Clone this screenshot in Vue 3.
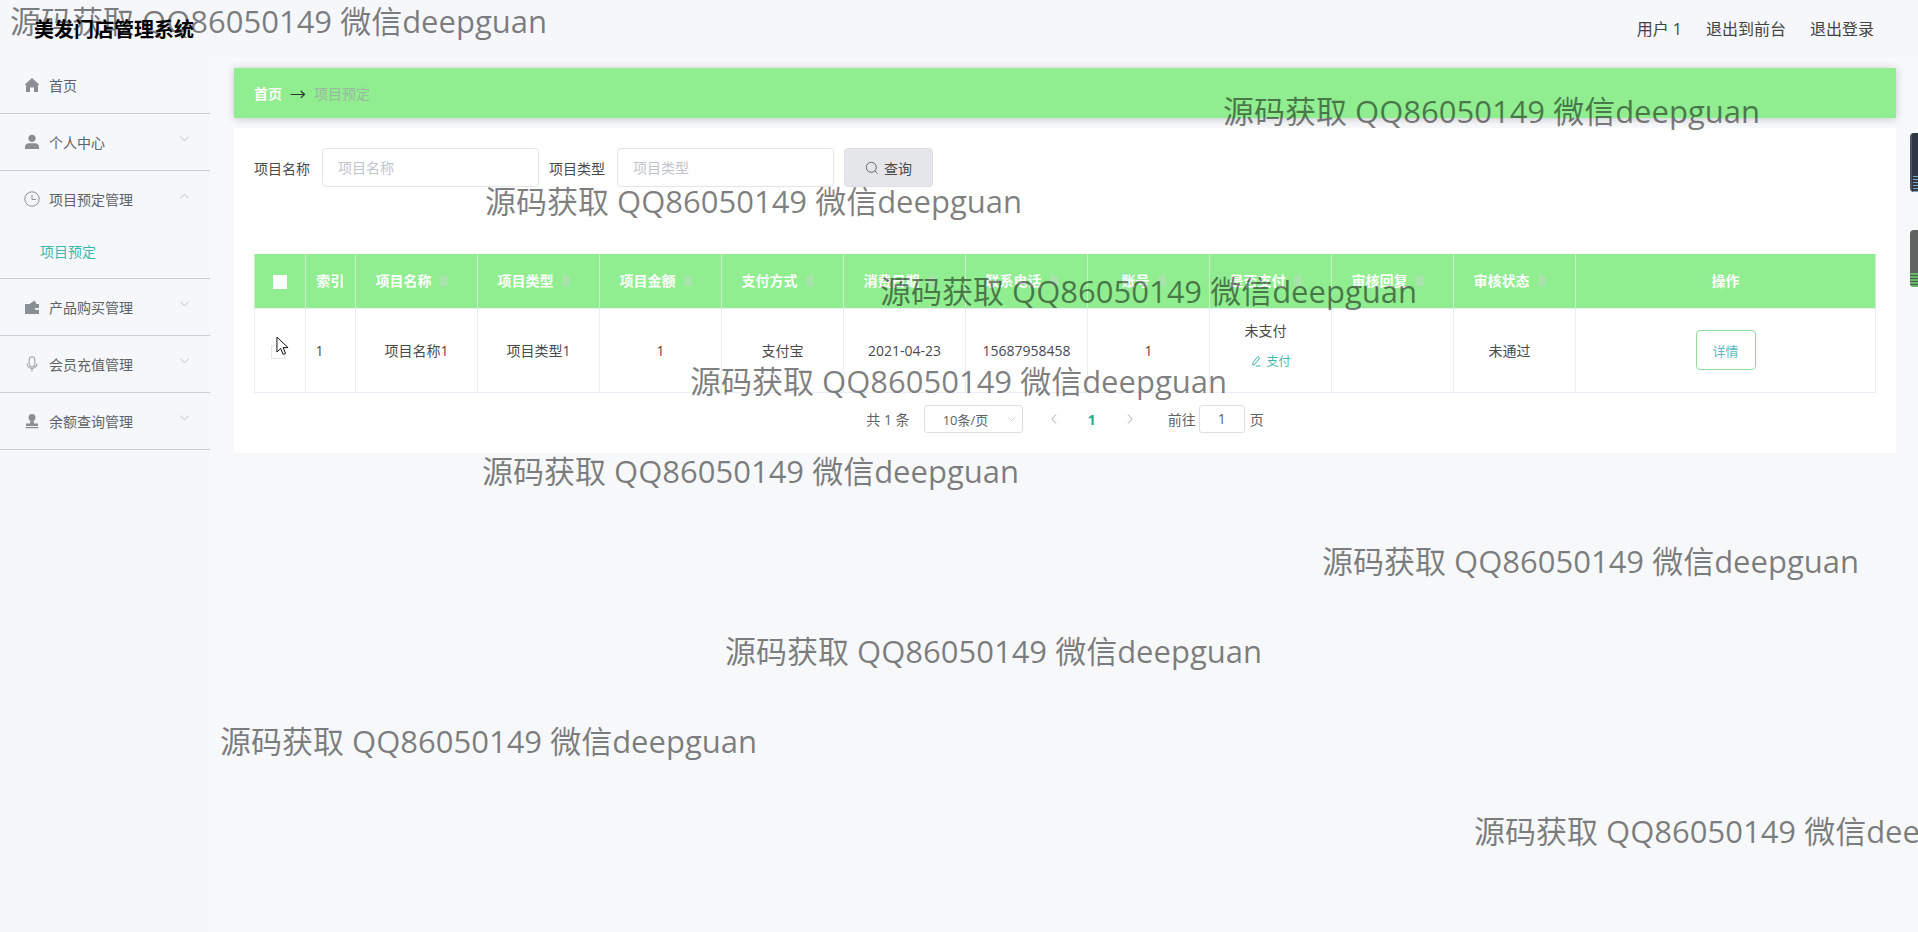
<template>
  <div class="page">
    <header class="topbar">
      <div class="logo">美发门店管理系统</div>
      <div class="top-links">
        <span>用户 1</span>
        <span>退出到前台</span>
        <span>退出登录</span>
      </div>
    </header>

    <div class="body-wrap">
      <aside class="sidebar">
        <template v-for="menu in menus" :key="menu.name">
          <div class="menu-item" :class="{ open: menu.children }">
            <div class="menu-title">
              <svg class="menu-icon" viewBox="0 0 16 16" v-html="menu.icon"></svg>
              <span>{{ menu.name }}</span>
              <svg v-if="menu.arrow" class="menu-arrow" viewBox="0 0 12 8">
                <path :d="menu.children ? 'M1.5 6.5 6 2l4.500 4.500' : 'M1.500 1.500 6 6l4.500-4.500'" />
              </svg>
            </div>
            <div v-for="child in menu.children" :key="child" class="submenu">{{ child }}</div>
          </div>
        </template>
      </aside>

      <main class="main">
        <div class="crumb">
          <span class="crumb-home">首页</span>
          <span class="crumb-sep">→</span>
          <span class="crumb-cur">项目预定</span>
        </div>

        <section class="card">
          <form class="search" @submit.prevent>
            <label>项目名称</label>
            <input type="text" placeholder="项目名称" />
            <label>项目类型</label>
            <input type="text" placeholder="项目类型" />
            <button type="submit" class="query-btn">
              <svg viewBox="0 0 14 14"><circle cx="6.300" cy="6.300" r="5" /><path d="m10 10 2.500 2.500" /></svg>
              查询
            </button>
          </form>

          <table class="grid">
            <colgroup>
              <col class="c-small" />
              <col class="c-small" />
              <col v-for="n in 10" :key="n" class="c-normal" />
              <col />
            </colgroup>
            <thead>
              <tr>
                <th><span class="head-check"></span></th>
                <th>索引</th>
                <th v-for="col in columns" :key="col">
                  {{ col }}<i class="sort"></i>
                </th>
                <th>操作</th>
              </tr>
            </thead>
            <tbody>
              <tr>
                <td><span class="row-check"></span></td>
                <td class="left">1</td>
                <td>项目名称1</td>
                <td>项目类型1</td>
                <td>1</td>
                <td>支付宝</td>
                <td>2021-04-23</td>
                <td>15687958458</td>
                <td>1</td>
                <td class="pay-cell">
                  <div class="pay-state">未支付</div>
                  <div class="pay-link">
                    <svg viewBox="0 0 12 12"><path d="M7.800 1.500 9.700 3 4.800 9.300 2.700 10l.2-2.200zM6 11h4.500" /></svg>
                    支付
                  </div>
                </td>
                <td></td>
                <td class="shifted">未通过</td>
                <td><button type="button" class="detail-btn">详情</button></td>
              </tr>
            </tbody>
          </table>

          <div class="pager">
            <span>共 1 条</span>
            <div class="page-size">10条/页
              <svg viewBox="0 0 12 8"><path d="M1.500 1.500 6 6l4.500-4.500" /></svg>
            </div>
            <svg class="page-arrow" viewBox="0 0 8 12"><path d="M6 1.500 1.800 6 6 10.500" /></svg>
            <span class="page-num">1</span>
            <svg class="page-arrow" viewBox="0 0 8 12"><path d="M2 1.500 6.200 6 2 10.500" /></svg>
            <span class="goto">前往</span>
            <div class="page-input">1</div>
            <span>页</span>
          </div>
        </section>
      </main>
    </div>

    <!-- things sitting on top of the page -->
    <div
      v-for="(mark, i) in watermarks"
      :key="i"
      class="watermark"
      :style="{ left: mark.x + 'px', top: mark.y + 'px' }"
    >源码获取 QQ86050149 微信deepguan</div>

    <div class="edge-tab edge-a"><i></i></div>
    <div class="edge-tab edge-b"><i></i></div>

    <svg class="cursor" viewBox="0 0 14 22">
      <path d="M1 1v16l4-3.800 2.700 6.300 2.600-1.100L7.600 12.200H13z" />
    </svg>
  </div>
</template>

<script setup>
const columns = [
  '项目名称', '项目类型', '项目金额', '支付方式', '消费日期',
  '联系电话', '账号', '是否支付', '审核回复', '审核状态'
]

const menus = [
  {
    name: '首页',
    arrow: false,
    icon: '<path fill="#8a8f96" d="M8 1 .8 7.600 2 8.600V15h4v-4.500h4V15h4V8.600l1.200-1z"/>'
  },
  {
    name: '个人中心',
    arrow: true,
    icon: '<circle fill="#8a8f96" cx="8" cy="4.300" r="3.600"/><path fill="#8a8f96" d="M1 15v-2.200C1 10.300 3 9.300 5 9.300h6c2 0 4 1 4 3.500V15z"/>'
  },
  {
    name: '项目预定管理',
    arrow: true,
    icon: '<circle fill="none" stroke="#8a8f96" stroke-width="1" cx="8" cy="8" r="7.200"/><path fill="none" stroke="#8a8f96" stroke-width="1" d="M8 3.800V8.500h3.800"/>',
    children: ['项目预定']
  },
  {
    name: '产品购买管理',
    arrow: true,
    icon: '<path fill="#8a8f96" d="M1 5h14v10H1z"/><path fill="#8a8f96" d="M5.500 5 10.500 1.500 12.500 5z"/><path fill="#f5f7fb" d="M11 9h4v1.800h-4z"/>'
  },
  {
    name: '会员充值管理',
    arrow: true,
    icon: '<rect fill="none" stroke="#a0a5ab" stroke-width="1.100" x="5.200" y=".8" width="5.600" height="10" rx="2.800"/><path fill="none" stroke="#a0a5ab" stroke-width="1.100" d="M3 7.500c0 6.500 10 6.500 10 0M8 12.500v3"/>'
  },
  {
    name: '余额查询管理',
    arrow: true,
    icon: '<circle fill="#8a8f96" cx="8" cy="4.500" r="3.500"/><path fill="#8a8f96" d="M6.500 7h3l.5 3.500h4v2.500H2v-2.500h4zM1.500 14h13v1.200h-13z"/>'
  }
]

const watermarks = [
  { x: 10, y: 0 },
  { x: 1223, y: 90 },
  { x: 485, y: 180 },
  { x: 880, y: 270 },
  { x: 690, y: 360 },
  { x: 482, y: 450 },
  { x: 1322, y: 540 },
  { x: 725, y: 630 },
  { x: 220, y: 720 },
  { x: 1474, y: 810 }
]
</script>

<style>
html, body {
  margin: 0;
  background: #f7f8fa;
  overflow: hidden;
}
</style>

<style scoped>
.page {
  position: relative;
  width: 1918px;
  height: 932px;
  overflow: hidden;
  font-family: "Open Sans", "Noto Sans CJK SC", sans-serif;
  font-size: 14px;
  color: #4a4a4a;
}

.topbar {
  height: 57px;
  display: flex;
  align-items: center;
  justify-content: space-between;
  padding: 0 44px 0 34px;
  background: #f5f7fb;
}

.logo {
  font-size: 20px;
  font-weight: 700;
  color: #000;
}

.top-links {
  display: flex;
  gap: 24px;
  margin-bottom: 2px;
  font-size: 16px;
  color: #444;
}

.body-wrap {
  display: flex;
  height: 875px;
}

.sidebar {
  width: 210px;
  flex: none;
  background: #f5f7fb;
}

.menu-item {
  border-bottom: 1px solid #c9ccd2;
}

.menu-title {
  height: 56px;
  display: flex;
  align-items: center;
  padding: 0 20px 0 24px;
  color: #606266;
}

.menu-icon {
  width: 16px;
  height: 16px;
  margin-right: 9px;
}

.menu-arrow {
  width: 11px;
  height: 8px;
  margin-left: auto;
  margin-bottom: 6px;
  fill: none;
  stroke: #b5b9bf;
  stroke-width: 1;
}

.submenu {
  height: 51px;
  line-height: 50px;
  padding-left: 40px;
  color: #3fb7a8;
}

.main {
  flex: 1;
  padding: 11px 22px 0 24px;
}

.crumb {
  height: 50px;
  display: flex;
  align-items: center;
  gap: 8px;
  padding-left: 20px;
  background: #90ee90;
  box-shadow: 0 1px 8px rgba(0, 0, 0, 0.2);
}

.crumb-home {
  color: #fff;
  font-weight: 700;
}

.crumb-sep {
  color: #333;
  font-size: 16px;
}

.crumb-cur {
  color: #9ab8a0;
}

.card {
  height: 325px;
  margin-top: 10px;
  padding: 20px;
  box-sizing: border-box;
  background: #fff;
}

.search {
  display: flex;
  align-items: center;
  height: 39px;
}

.search label {
  width: 68px;
  color: #4a4a4a;
}

.search input {
  width: 217px;
  height: 39px;
  box-sizing: border-box;
  margin-right: 10px;
  padding: 0 15px;
  border: 1px solid #e3e5ea;
  border-radius: 4px;
  outline: none;
  font: inherit;
}

.search input::placeholder {
  color: #c0c4cc;
}

.query-btn {
  width: 89px;
  height: 39px;
  display: flex;
  align-items: center;
  justify-content: center;
  gap: 5px;
  border: 1px solid #dcdfe6;
  border-radius: 4px;
  background: #e4e6ea;
  color: #4a4a4a;
  font: inherit;
}

.query-btn svg {
  width: 14px;
  height: 14px;
  fill: none;
  stroke: #666;
}

.grid {
  width: 1622px;
  margin-top: 67px;
  table-layout: fixed;
  border-collapse: collapse;
}

.c-small {
  width: 50.500px;
}

.c-normal {
  width: 122px;
}

.grid th {
  height: 52px;
  padding: 0 0 2px;
  border: 1px solid #c5f3c5;
  border-top: 0;
  border-bottom: 0;
  background: #90ee90;
  color: #fff;
  font-weight: 700;
  text-align: center;
}

.grid td {
  height: 84px;
  padding: 0 0 1px;
  box-sizing: border-box;
  border: 1px solid #ebeef5;
  color: #4a4a4a;
  text-align: center;
}

.grid td.left {
  padding-left: 10px;
  text-align: left;
}

.grid td.shifted {
  padding-right: 10px;
}

.grid td.pay-cell {
  padding-bottom: 12px;
}

.sort {
  display: inline-block;
  width: 8px;
  height: 12px;
  margin: 0 10px 0 8px;
  border-radius: 4px;
  vertical-align: -1px;
  background: #a7e4aa;
}

.head-check {
  display: inline-block;
  width: 14px;
  height: 14px;
  background: #fff;
  vertical-align: middle;
}

.row-check {
  display: inline-block;
  width: 12px;
  height: 12px;
  margin-right: 4px;
  border: 1px solid #e4e7ed;
  vertical-align: middle;
}

.pay-state {
  margin: 0 10px 12px 0;
}

.pay-link {
  display: flex;
  align-items: center;
  justify-content: center;
  gap: 4px;
  font-size: 12px;
  color: #3fb7a8;
}

.pay-link svg {
  width: 12px;
  height: 12px;
  fill: none;
  stroke: #3fb7a8;
}

.detail-btn {
  width: 60px;
  height: 40px;
  border: 1px solid #90dca0;
  border-radius: 4px;
  background: #fff;
  color: #5fb8c0;
  font: inherit;
  font-size: 13px;
}

.pager {
  display: flex;
  align-items: center;
  justify-content: center;
  height: 28px;
  margin-top: 12px;
  color: #606266;
}

.page-size {
  width: 99px;
  height: 28px;
  display: flex;
  align-items: center;
  justify-content: space-between;
  box-sizing: border-box;
  margin: 0 27px 0 14px;
  padding: 0 6px 0 18px;
  border: 1px solid #dcdfe6;
  border-radius: 3px;
  font-size: 13px;
}

.page-size svg {
  width: 9px;
  height: 6px;
  fill: none;
  stroke: #c0c4cc;
}

.page-arrow {
  width: 8px;
  height: 12px;
  fill: none;
  stroke: #a9adb3;
}

.page-num {
  margin: 0 30px;
  font-weight: 700;
  color: #1fae92;
}

.goto {
  margin-left: 34px;
}

.page-input {
  width: 46px;
  height: 28px;
  line-height: 26px;
  box-sizing: border-box;
  margin: 0 5px 0 3px;
  border: 1px solid #dcdfe6;
  border-radius: 3px;
  text-align: center;
}

.watermark {
  position: absolute;
  white-space: nowrap;
  font-size: 31px;
  line-height: 42px;
  color: rgba(0, 0, 0, 0.5);
  pointer-events: none;
}

.edge-tab {
  position: absolute;
  right: 0;
  width: 8px;
  overflow: hidden;
  border-radius: 4px 0 0 4px;
}

.edge-tab i {
  position: absolute;
  left: 0;
  right: 0;
  bottom: 0;
}

.edge-a {
  top: 133px;
  height: 59px;
  background: linear-gradient(90deg, #4a5563 0 2px, #2e3742 2px);
}

.edge-a i {
  height: 16px;
  left: 3px;
  background: repeating-linear-gradient(180deg, #7fa8c4 0 1px, #2e3742 1px 3px);
}

.edge-b {
  top: 230px;
  height: 57px;
  background: #5f6460;
}

.edge-b i {
  height: 14px;
  background: repeating-linear-gradient(180deg, #6fb26f 0 2px, #3d6a42 2px 3px);
}

.cursor {
  position: absolute;
  left: 276px;
  top: 336px;
  width: 13px;
  height: 21px;
  fill: #fff;
  stroke: #000;
  stroke-width: 1;
}
</style>
